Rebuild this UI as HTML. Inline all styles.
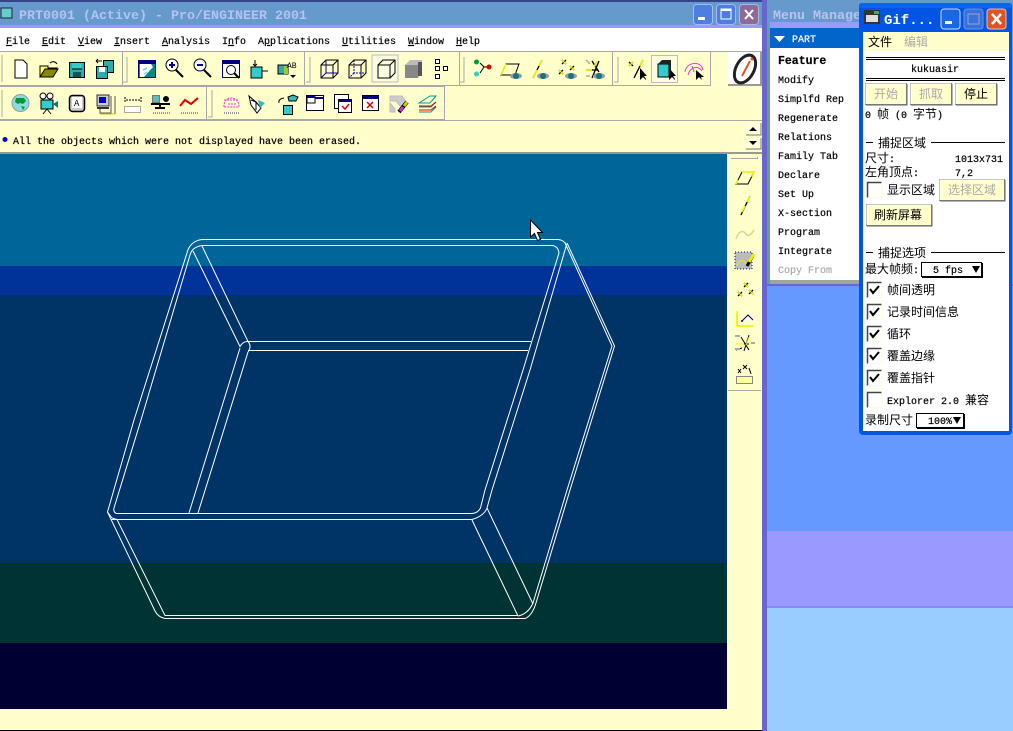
<!DOCTYPE html>
<html><head><meta charset="utf-8"><style>
html,body{margin:0;padding:0;background:#6699ff;overflow:hidden}
svg{display:block}
.m{font-family:"Liberation Mono",monospace;font-size:10px;fill:#000;stroke:#000;stroke-width:.2}
.c{font-family:"Liberation Mono","WenQuanYi Zen Hei","Noto Sans CJK SC",sans-serif;font-size:12px;fill:#000}
.t{font-family:"Liberation Mono",monospace;font-size:10px;stroke:#000;stroke-width:.2}
.w path{fill:none;stroke:#fff;stroke-width:1}
</style></head><body>
<svg xmlns="http://www.w3.org/2000/svg" width="1013" height="731" viewBox="0 0 1013 731">
<!-- desktop -->
<rect x="0" y="0" width="1013" height="731" fill="#6699ff"/>
<rect x="767" y="0" width="246" height="28" fill="#6699cc"/>
<rect x="770" y="22" width="92" height="6" fill="#9999ff"/>
<rect x="767" y="28" width="3" height="256" fill="#6699aa"/>
<rect x="767" y="284" width="246" height="2" fill="#6666cc"/>
<rect x="767" y="531" width="246" height="75" fill="#9999ff"/>
<rect x="767" y="606" width="246" height="2" fill="#8888ee"/>
<rect x="767" y="608" width="246" height="123" fill="#99ccff"/>
<rect x="762" y="0" width="5" height="731" fill="#6666cc"/>
<!-- main window -->
<rect x="0" y="0" width="762" height="731" fill="#ffffcc"/>
<rect x="0" y="0" width="762" height="2" fill="#334488"/>
<rect x="0" y="2" width="762" height="23" fill="#6699cc"/>
<rect x="0" y="25" width="762" height="3" fill="#9999ff"/>
<rect x="0" y="28" width="762" height="24" fill="#fff"/>
<rect x="1" y="8" width="11" height="10" fill="#66cccc" stroke="#223" stroke-width="1"/>
<text x="19" y="19" font-family="Liberation Mono,monospace" font-size="13.33" font-weight="bold" fill="#b4c4f0">PRT0001 (Active) - Pro/ENGINEER 2001</text>
<g>
<rect x="693.500" y="4.500" width="19" height="20" rx="3" fill="#4d7ee0" stroke="#a4bdf0"/><rect x="698" y="17" width="7" height="3" fill="#fff"/>
<rect x="716.500" y="4.500" width="19" height="20" rx="3" fill="#4d7ee0" stroke="#a4bdf0"/><rect x="721" y="9" width="10" height="10" fill="none" stroke="#fff"/><rect x="721" y="9" width="10" height="2" fill="#fff"/>
<rect x="739.500" y="4.500" width="19" height="20" rx="3" fill="#8c6a9a" stroke="#b8b4d8"/><path d="M745 10l8 9M753 10l-8 9" stroke="#fff" stroke-width="2"/>
</g>
<g class="m">
<text x="6" y="44"><tspan text-decoration="underline">F</tspan>ile</text>
<text x="42" y="44"><tspan text-decoration="underline">E</tspan>dit</text>
<text x="78" y="44"><tspan text-decoration="underline">V</tspan>iew</text>
<text x="114" y="44"><tspan text-decoration="underline">I</tspan>nsert</text>
<text x="162" y="44"><tspan text-decoration="underline">A</tspan>nalysis</text>
<text x="222" y="44">I<tspan text-decoration="underline">n</tspan>fo</text>
<text x="258" y="44">A<tspan text-decoration="underline">p</tspan>plications</text>
<text x="342" y="44"><tspan text-decoration="underline">U</tspan>tilities</text>
<text x="408" y="44"><tspan text-decoration="underline">W</tspan>indow</text>
<text x="456" y="44"><tspan text-decoration="underline">H</tspan>elp</text>
</g>
<!-- toolbar frames -->
<rect x="0" y="51" width="762" height="1" fill="#a8a8a8"/>
<rect x="0" y="85" width="710" height="1" fill="#a8a8a8"/>
<rect x="0" y="85" width="444" height="2" fill="#a8a8a8"/>
<rect x="0" y="119" width="445" height="2" fill="#a8a8a8"/>
<rect x="122" y="52" width="1" height="33" fill="#a8a8a8"/>
<rect x="304" y="52" width="1" height="33" fill="#a8a8a8"/>
<rect x="459" y="52" width="1" height="33" fill="#a8a8a8"/>
<rect x="612" y="52" width="1" height="33" fill="#a8a8a8"/>
<rect x="710" y="52" width="1" height="34" fill="#a8a8a8"/>
<rect x="206" y="86" width="1" height="33" fill="#a8a8a8"/>
<rect x="444" y="86" width="1" height="34" fill="#a8a8a8"/>
<path d="M2 55v27M127 57v25h-4M310 57v25h-4M464 57v25h-4M618 57v25h-4M2 90v27M212 90v27h-4" stroke="#a8a8a8" fill="none"/>
<!-- row 1 icons -->
<path d="M15 60h8l4 4v14H15z" fill="#fff" stroke="#000"/>
<path d="M40 66h8v2h9l-4 9H40z" fill="#ffff66" stroke="#000"/><path d="M40 77l5-8h13l-5 8z" fill="#888800" stroke="#000"/><path d="M50 63q4-3 7 1" fill="none" stroke="#000"/>
<rect x="69.500" y="62.500" width="15" height="15" fill="#33aaaa" stroke="#000"/><rect x="72" y="63" width="10" height="6" fill="#33cccc"/><path d="M72 69h10" stroke="#000"/><rect x="73" y="72" width="8" height="5" fill="#115555"/>
<rect x="103.500" y="60.500" width="10" height="12" fill="#33aaaa" stroke="#000"/><rect x="96.500" y="66.500" width="11" height="12" fill="#33aaaa" stroke="#000"/><rect x="99" y="67" width="6" height="5" fill="#fff"/><path d="M96 61h6M96 61l2-2M96 61l2 2" stroke="#000" fill="none"/>
<rect x="138.500" y="60.500" width="17" height="17" fill="#008888" stroke="#000080"/><rect x="139" y="61" width="16" height="3" fill="#000080"/><path d="M140 64h11l2 3-9 10h-4z" fill="#fff"/><path d="M143 70l4-2M144 74l3-2" stroke="#33cccc"/>
<circle cx="172" cy="65" r="6" fill="#fff" stroke="#000"/><path d="M169 65h6M172 62v6" stroke="#000099" stroke-width="2"/><path d="M176 70l7 7" stroke="#000" stroke-width="2"/>
<circle cx="200" cy="65" r="6" fill="#fff" stroke="#000"/><path d="M197 65h6" stroke="#000099" stroke-width="2"/><path d="M204 70l7 7" stroke="#000" stroke-width="2"/>
<rect x="222.500" y="60.500" width="17" height="17" fill="#fff" stroke="#000080"/><rect x="223" y="61" width="16" height="3" fill="#000080"/><circle cx="231" cy="70" r="4.500" fill="#fff" stroke="#000"/><path d="M234 73l5 5" stroke="#000" stroke-width="2"/>
<path d="M251 67h11v11h-11z" fill="#33cccc" stroke="#000"/><path d="M255 60v6M253 64l2 2 2-2M268 71h-6" stroke="#000" fill="none"/>
<path d="M278 65h10v9h-10z" fill="#33aaaa" stroke="#000"/><rect x="284" y="66" width="4" height="8" fill="#99cc33"/><text x="287" y="68" font-family="Liberation Mono,monospace" font-size="8">AB</text><path d="M290 75h6l-3 3z" fill="#000"/>
<g fill="none" stroke="#000"><path d="M321 65h12v13h-12zM321 65l5-5h12v13l-5 5M333 65l5-5"/><path d="M326 60v13h12M326 73l-5 5" stroke="#000099"/>
<path d="M349 65h12v13h-12zM349 65l5-5h12v13l-5 5M361 65l5-5"/><path d="M354 60v13h12M354 73l-5 5" stroke="#000099" stroke-dasharray="2 1"/></g>
<rect x="372" y="55" width="26" height="27" fill="#fbfbe0" stroke="#bbb"/>
<path d="M378 65h12v13h-12zM378 65l5-5h12v13l-5 5M390 65l5-5" fill="none" stroke="#000"/>
<path d="M405 65h13v13h-13z" fill="#888"/><path d="M405 65l5-5h12v13l-4 5V65z" fill="#bbb"/><rect x="418" y="62" width="4" height="14" fill="#555"/>
<g fill="#fff" stroke="#000"><rect x="435.500" y="59.500" width="4" height="4"/><rect x="435.500" y="66.500" width="4" height="4"/><rect x="435.500" y="74.500" width="4" height="4"/><rect x="443.500" y="66.500" width="4" height="4"/></g>
<path d="M480 63l4 4-4 6M484 67h7" fill="none" stroke="#000"/><circle cx="476.500" cy="62" r="2.500" fill="#009933"/><circle cx="476.500" cy="74" r="2.500" fill="#33cccc"/><circle cx="489" cy="67" r="2.500" fill="#dd0000"/>
<path d="M501 75l5-11h13l-4 11z" fill="none" stroke="#000"/><path d="M501 75l5-11" stroke="#ee0" stroke-width="1.500"/><ellipse cx="516" cy="76" rx="6" ry="3" fill="#99a"/><circle cx="516" cy="76" r="3" fill="#117777"/>
<path d="M533 78l9-18" stroke="#000" stroke-width="1.300"/><path d="M533 78l4-8M539 66l3-6" stroke="#ee0" stroke-width="1.500"/><ellipse cx="543" cy="76" rx="6" ry="3" fill="#99a"/><circle cx="543" cy="76" r="3" fill="#117777"/>
<g stroke-width="1.300"><path d="M562 60l4 4M566 60l-4 4M559 70l4 4M563 70l-4 4M570 66l4 4M574 66l-4 4" stroke="#000"/><path d="M562 60l4 4M559 70l4 4M570 66l4 4" stroke="#ee0"/></g><ellipse cx="571" cy="76" rx="6" ry="3" fill="#99a"/><circle cx="571" cy="76" r="3" fill="#117777"/>
<path d="M586 70h12M592 78l7-17M592 61l7 11" stroke="#000" stroke-width="1.300"/><path d="M586 70h6M594 67l3-6" stroke="#ee0" stroke-width="1.500"/><ellipse cx="599" cy="76" rx="6" ry="3" fill="#99a"/><circle cx="599" cy="76" r="3" fill="#117777"/><path d="M586 60l4 4M586 76h4" stroke="#aaa" stroke-width="1.500"/>
<path d="M629 62l4 4M633 62l-4 4M634 78l9-18" stroke="#000" stroke-width="1.300"/><path d="M629 66l4-4M640 66l3-6" stroke="#ee0" stroke-width="1.500"/><path d="M640 68v12l3-3 3 3v-1l-2-3h3z" fill="#000"/>
<rect x="651.500" y="55.500" width="26" height="27" fill="#fbfbe0" stroke="#bbb"/>
<path d="M658 64h11v13h-11z" fill="#33cccc" stroke="#000"/><path d="M658 64l4-4h9v13l-2 4V64z" fill="#222"/><path d="M669 68v12l3-3 3 3v-1l-2-3h3z" fill="#000"/>
<path d="M685 72c1-10 16-12 18-2M688 75c2-8 10-10 14-4M692 66l2 6" fill="none" stroke="#ee33dd"/><path d="M696 70v10l3-3 3 3-1-3h3z" fill="#000"/>
<!-- info button -->
<rect x="728" y="52" width="33" height="33" fill="#fff"/><path d="M728 85h33V52" fill="none" stroke="#999" stroke-width="2"/>
<ellipse cx="745" cy="69" rx="9" ry="15" transform="rotate(28 745 69)" fill="none" stroke="#222" stroke-width="3"/><path d="M742 76l8-15" stroke="#e05522" stroke-width="2"/><circle cx="752" cy="59" r="1.500" fill="#e05522"/>
<!-- row 2 icons -->
<circle cx="20.500" cy="103" r="8.500" fill="#88dddd" stroke="#999"/><path d="M16 98h8l2 3-3 3-3-1-2 1-3-2zM21 106l4 1-2 3z" fill="#009933"/>
<circle cx="43" cy="96" r="3" fill="#fff" stroke="#000"/><circle cx="50" cy="96" r="3" fill="#fff" stroke="#000"/><rect x="41" y="100" width="12" height="9" fill="#33cccc" stroke="#000"/><path d="M53 104l5-3v7z" fill="#117777"/><path d="M47 109l-4 5M47 109l4 5" stroke="#000"/>
<rect x="69.500" y="95.500" width="15" height="16" rx="3" fill="#ccc" stroke="#000" stroke-width="1.500"/><rect x="72" y="97" width="10" height="11" fill="#fff"/><text x="74" y="106" font-family="Liberation Mono,monospace" font-size="9">A</text>
<rect x="97" y="95" width="12" height="11" fill="#ccc" stroke="#333"/><rect x="99" y="97" width="7" height="6" fill="#0000cc"/><path d="M97 108h12" stroke="#333" stroke-width="2"/><path d="M100 109v4h11M111 96v18M115 96v18" stroke="#555" fill="none"/><path d="M100 114h15" stroke="#cc0"/>
<path d="M125 97v6M141 97v6M126 100h14" stroke="#000" stroke-dasharray="2 1"/><rect x="124.500" y="106.500" width="16" height="6" fill="#fff" stroke="#555" stroke-dasharray="1 1"/>
<rect x="152.500" y="95.500" width="7" height="7" fill="#66bbbb" stroke="#777"/><path d="M151 104h19M160 104v4M155 108h10" stroke="#000" stroke-width="2"/><circle cx="166" cy="99" r="3" fill="#000"/><path d="M153 113h17" stroke="#999" stroke-dasharray="1 1" stroke-width="2"/>
<path d="M180 106l5-6 6 4 7-6" fill="none" stroke="#dd0000" stroke-width="2"/><path d="M181 113h17" stroke="#999" stroke-dasharray="1 1" stroke-width="2"/>
<path d="M224 107c-1-12 15-12 15 0zM228 104h8M224 100h15" fill="none" stroke="#ee33dd" stroke-dasharray="2 1"/><path d="M224 113h15" stroke="#999" stroke-dasharray="1 1" stroke-width="2"/>
<path d="M249 96l7 6 5 6-4 5-6-8z" fill="#fff" stroke="#000"/><path d="M258 100l7 3-5 5z" fill="#33bbbb"/><path d="M251 100l5 2v8" fill="none" stroke="#000"/>
<path d="M288 97l5-2 5 2-2 4h-7z" fill="#33bbbb" stroke="#000"/><rect x="283.500" y="105.500" width="9" height="9" fill="#33cccc" stroke="#000"/><path d="M284 98q-6 1-5 5" fill="none" stroke="#000"/>
<rect x="306.500" y="95.500" width="17" height="15" fill="#fff" stroke="#000"/><rect x="307" y="96" width="8" height="7" fill="#fff" stroke="#000"/><rect x="307" y="96" width="8" height="2" fill="#000080"/><rect x="315" y="97" width="8" height="2" fill="#000080"/>
<rect x="334.500" y="94.500" width="14" height="14" fill="#fff" stroke="#000"/><rect x="338.500" y="99.500" width="13" height="13" fill="#fff" stroke="#000"/><rect x="339" y="100" width="12" height="2" fill="#000080"/><path d="M342 106l3 3 4-5" fill="none" stroke="#dd0000" stroke-width="1.500"/>
<rect x="362.500" y="95.500" width="16" height="15" fill="#fff" stroke="#000"/><rect x="363" y="96" width="15" height="3" fill="#000080"/><path d="M367 102l6 6M373 102l-6 6" stroke="#dd0000" stroke-width="1.500"/>
<path d="M390 96h12l5 7-6 4-5-6h-6zM390 103l5 6v3h-5z" fill="#ccc" stroke="#bbb"/><path d="M399 112l8-10" stroke="#000" stroke-width="4"/><path d="M400 111l3-4" stroke="#cc33cc" stroke-width="3"/><path d="M404 106l3-4" stroke="#cccc00" stroke-width="3"/>
<path d="M419 103l11-7h6l-6 7zM419 107h12l5-5M419 112h12l5-5" fill="none" stroke="#009999"/><path d="M419 106h12l5-4M419 110h12l5-4" fill="none" stroke="#dd0000"/>
<!-- message -->
<rect x="0" y="120" width="762" height="1" fill="#a8a8a8"/>
<circle cx="5" cy="139.500" r="2.500" fill="#0000ee"/>
<text x="13" y="144" class="m">All the objects which were not displayed have been erased.</text>
<g>
<rect x="746" y="123" width="15" height="12" fill="#ffffdd"/><path d="M746 135h15v-12" fill="none" stroke="#777"/><path d="M749 131h8l-4-4z" fill="#000"/>
<rect x="746" y="138" width="15" height="11" fill="#ffffdd"/><path d="M746 149h15v-11" fill="none" stroke="#777"/><path d="M749 141h8l-4 4z" fill="#000"/>
</g>
<rect x="0" y="152" width="762" height="2" fill="#999"/>
<!-- viewport -->
<rect x="0" y="154" width="727" height="112" fill="#006699"/>
<rect x="0" y="266" width="727" height="29" fill="#003399"/>
<rect x="0" y="295" width="727" height="268" fill="#003366"/>
<rect x="0" y="563" width="727" height="80" fill="#003333"/>
<rect x="0" y="643" width="727" height="66" fill="#000033"/>
<rect x="0" y="730" width="762" height="1" fill="#000"/>
<!-- wireframe -->
<g class="w">
<path d="M202 239.500H558Q564 240 566.500 245L530 370 492 490 487 508Q484 516 472 519.500H110.500"/>
<path d="M202 245.500H552Q558 246 559 253L523 370 485 490 480.500 508Q478 513 472 513.500H116.500Q113 512 114 508L141 420 190 255Q192 247 202 245.500"/>
<path d="M202 239.500Q190 241 187 253L134 420 107.500 512 112 518 117 519.500"/>
<path d="M193 251L240 346.500Q243 341 248 341.500H531M202 246L248 341.500Q252 346 248 352M248 350.500H528"/>
<path d="M240 348L189 513M248 352L198 513"/>
<path d="M565 243L612 346 567 490 533 603Q528 614 518 616"/>
<path d="M567 243L614.500 346 570 490 536 603Q532 616 525 618.500"/>
<path d="M487 508L533 604M472 520L518 616"/>
<path d="M107.500 512L155 611Q158 617 165 618.500H525M117 519.500L165 615.500H518"/>
</g>
<!-- cursor -->
<path d="M530.500 220v17l4-3.500 3 7 3-1-3-7h5z" fill="#fff" stroke="#000"/>
<!-- right toolbar -->
<rect x="727" y="154" width="35" height="576" fill="#ffffcc"/>
<rect x="731" y="158" width="27" height="1" fill="#a8a8a8"/><rect x="757" y="157" width="1" height="2" fill="#a8a8a8"/>
<rect x="728" y="390" width="33" height="1" fill="#a8a8a8"/>
<path d="M736 184l6-12h12l-6 12z" fill="none" stroke="#000"/><path d="M742 172h12l-2 5M736 184l2-4" stroke="#ee0" fill="none" stroke-width="1.500"/>
<path d="M741 215l9-19" stroke="#000" stroke-width="1.300"/><path d="M742 212l3-6M747 202l3-6" stroke="#ee0" stroke-width="1.500"/>
<path d="M736 239c3-10 8-8 10-5s5 1 8-4" fill="none" stroke="#d8d88c" stroke-width="1.500"/>
<rect x="735" y="252" width="17" height="17" fill="#bbb" stroke="#000099" stroke-dasharray="1 2"/><path d="M737 266c3-8 7-6 9-2" fill="none" stroke="#ee0"/><path d="M747 266l6-10" stroke="#000" stroke-width="3"/><path d="M749 262l5-8" stroke="#ee0" stroke-width="3"/>
<g stroke-width="1.300"><path d="M744 283l4 4M748 283l-4 4M738 292l4 4M742 292l-4 4M749 290l4 4M753 290l-4 4" stroke="#000"/><path d="M744 283l4 4M738 292l4 4M749 290l4 4" stroke="#ee0"/></g>
<path d="M737 311v15h16" stroke="#ee0" fill="none" stroke-width="1.500"/><path d="M742 321l6-6 5 5" fill="none" stroke="#000099"/><circle cx="742" cy="321" r="1" fill="#000099"/>
<path d="M736 350l6-2M744 351l5-16M741 337l8 13M737 344h12" stroke="#000"/><path d="M736 344h8M746 345l3-8" stroke="#ee0"/><path d="M735 336h5M735 349h5M751 343h4" stroke="#aaa" stroke-width="2"/>
<path d="M743 365l4 4M747 365l-4 4M738 369l3 4M741 369l-3 4M749 368l2 6" stroke="#000"/><rect x="736.500" y="376.500" width="16" height="7" fill="#ffff99" stroke="#888"/>
<!-- menu manager -->
<text x="773" y="19" font-family="Liberation Mono,monospace" font-size="13.33" font-weight="bold" fill="#b8c4f0">Menu Manager</text>
<rect x="770" y="28" width="92" height="252" fill="#fff"/>
<rect x="770" y="28" width="92" height="20" fill="#0066cc"/>
<path d="M774 36h11l-5.500 6z" fill="#fff"/>
<text x="792" y="42" class="t" style="fill:#fff;stroke:#fff">PART</text>
<rect x="770" y="280" width="92" height="4" fill="#99aa99"/>
<g class="m">
<text x="778" y="64" style="font-weight:bold;font-size:11.500px">Feature</text>
<text x="778" y="83">Modify</text>
<text x="778" y="102">Simplfd Rep</text>
<text x="778" y="121">Regenerate</text>
<text x="778" y="140">Relations</text>
<text x="778" y="159">Family Tab</text>
<text x="778" y="178">Declare</text>
<text x="778" y="197">Set Up</text>
<text x="778" y="216">X-section</text>
<text x="778" y="235">Program</text>
<text x="778" y="254">Integrate</text>
<text x="778" y="273" style="fill:#aaa;stroke:#aaa">Copy From</text>
</g>
<!-- gif window -->
<rect x="859" y="3" width="153" height="432" rx="4" fill="#0055e5"/>
<rect x="859" y="3" width="153" height="5" rx="3" fill="#0a66f0"/>
<rect x="863" y="32" width="146" height="399" fill="#fff"/>
<rect x="863" y="32" width="146" height="19" fill="#ffffcc"/>
<rect x="864" y="10" width="16" height="14" fill="#333"/><rect x="866" y="15" width="12" height="7" fill="#ddd"/><rect x="874" y="11" width="5" height="3" fill="#3a7"/>
<text x="884" y="24" font-family="Liberation Mono,monospace" font-size="14" font-weight="bold" fill="#fff">Gif...</text>
<rect x="941" y="9" width="19" height="20" rx="3" fill="#1a66e6" stroke="#cfe0ff"/><rect x="945" y="21" width="7" height="3" fill="#fff"/>
<rect x="964" y="9" width="19" height="20" rx="3" fill="#3a70d8" stroke="#6a96e0"/><rect x="968" y="14" width="11" height="10" fill="none" stroke="#8aa8e8"/>
<rect x="987" y="9" width="19" height="20" rx="3" fill="#dd5522" stroke="#f0c0b0"/><path d="M992 14l9 10M1001 14l-9 10" stroke="#fff" stroke-width="2.500"/>
<text x="868" y="46" class="c">文件</text><text x="904" y="46" class="c" style="fill:#aaa">编辑</text>
<path d="M866 57.500h139M866 59.500h139M866 78.500h139M866 80.500h139" stroke="#000"/>
<text x="911" y="72" class="m">kukuasir</text>
<!-- buttons -->
<g fill="#ffffcc" stroke="#888">
<rect x="865.500" y="83.500" width="41" height="21"/><rect x="910.500" y="83.500" width="41" height="21"/><rect x="955.500" y="83.500" width="41" height="21"/>
<rect x="939.500" y="179.500" width="65" height="21"/><rect x="866.500" y="204.500" width="65" height="21"/>
</g>
<path d="M866 105h41v-21M911 105h41v-21M956 105h41v-21M940 201h65v-21M867 226h65v-21" fill="none" stroke="#666" stroke-width="1"/>
<g fill="none" stroke="#fff"><path d="M866 104V84h40M911 104V84h40M956 104V84h40M940 200V180h64M867 225V205h64"/></g>
<g class="c">
<text x="874" y="98" style="fill:#aaa">开始</text><text x="919" y="98" style="fill:#aaa">抓取</text><text x="964" y="98">停止</text>
<text x="865" y="118" class="t">0</text><text x="877" y="118">帧</text><text x="895" y="118" class="t">(0</text><text x="913" y="118">字节</text><text x="937" y="118" class="t">)</text>
<text x="878" y="147">捕捉区域</text>
<text x="865" y="162">尺寸</text><text x="889" y="162" class="t">:</text><text x="955" y="162" class="t">1013x731</text>
<text x="865" y="176">左角顶点</text><text x="913" y="176" class="t">:</text><text x="955" y="176" class="t">7,2</text>
<text x="887" y="194">显示区域</text>
<text x="948" y="194" style="fill:#aaa">选择区域</text>
<text x="874" y="219">刷新屏幕</text>
<text x="878" y="257">捕捉选项</text>
<text x="865" y="273">最大帧频</text><text x="913" y="273" class="t">:</text>
<text x="887" y="294">帧间透明</text>
<text x="887" y="316">记录时间信息</text>
<text x="887" y="338">循环</text>
<text x="887" y="360">覆盖边缘</text>
<text x="887" y="382">覆盖指针</text>
<text x="887" y="404" class="t">Explorer 2.0</text><text x="965" y="404">兼容</text>
<text x="865" y="424">录制尺寸</text>
</g>
<path d="M866 142.500h7M931 142.500h74M866 252.500h7M931 252.500h74" stroke="#000"/>
<!-- checkboxes -->
<g fill="#fff" stroke="#444" stroke-width="1.500">
<path d="M867.500 197.500v-15h14"/><path d="M867.500 297.500v-15h14"/><path d="M867.500 319.500v-15h14"/><path d="M867.500 341.500v-15h14"/><path d="M867.500 363.500v-15h14"/><path d="M867.500 385.500v-15h14"/><path d="M867.500 407.500v-15h14"/>
</g>
<g fill="none" stroke="#ffffcc"><path d="M868 197.500h14v-15M868 297.500h14v-15M868 319.500h14v-15M868 341.500h14v-15M868 363.500h14v-15M868 385.500h14v-15M868 407.500h14v-15"/></g>
<g fill="none" stroke="#000" stroke-width="2"><path d="M870 289l3 4 6-7M870 311l3 4 6-7M870 333l3 4 6-7M870 355l3 4 6-7M870 377l3 4 6-7"/></g>
<!-- dropdowns -->
<rect x="921.500" y="262.500" width="60" height="14" fill="#fff" stroke="#000"/><path d="M922 277.500h60.500V263" stroke="#000" fill="none"/>
<text x="933" y="273" class="m">5 fps</text><path d="M972 266h8l-4 7z" fill="#000"/>
<rect x="916.500" y="413.500" width="47" height="14" fill="#fff" stroke="#000"/><path d="M917 428.500h47.500V414" stroke="#000" fill="none"/>
<text x="928" y="424" class="m">100%</text><path d="M953 417h8l-4 7z" fill="#000"/>
</svg>
</body></html>
